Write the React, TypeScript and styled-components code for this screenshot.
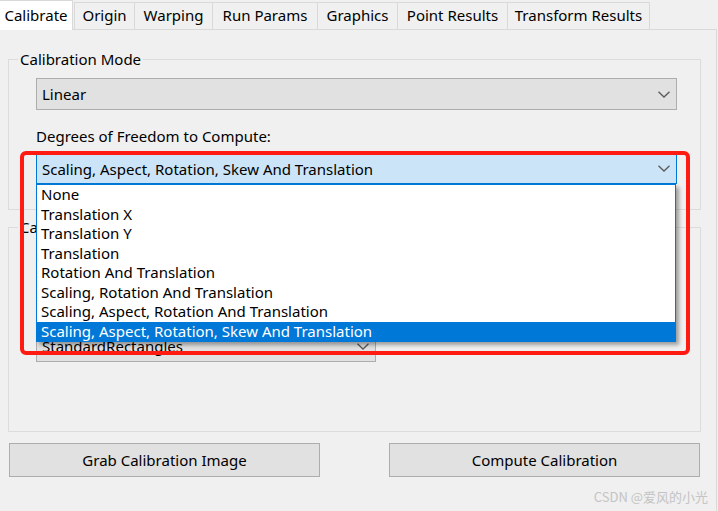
import React from "react";
import styled, { createGlobalStyle } from "styled-components";

const Global = createGlobalStyle`
  html, body { margin: 0; padding: 0; background: #f0f0f0; }
  body { font-family: "Segoe UI", "Noto Sans", "Liberation Sans", sans-serif; font-size: 15px; color: #000; }
  * { box-sizing: border-box; }
`;

const Window = styled.div`
  position: relative;
  width: 718px;
  height: 511px;
  overflow: hidden;
  background: #f0f0f0;
`;

const TabStrip = styled.div`
  display: flex;
  align-items: flex-end;
  height: 29px;
`;

const Tab = styled.div<{ $w: number; $active?: boolean }>`
  position: relative;
  z-index: ${(p) => (p.$active ? 2 : 1)};
  width: ${(p) => p.$w}px;
  height: ${(p) => (p.$active ? 30 : 27)}px;
  margin-bottom: ${(p) => (p.$active ? -1 : 0)}px;
  margin-right: ${(p) => (p.$active ? 1 : -1)}px;
  background: ${(p) => (p.$active ? "#ffffff" : "#f0f0f0")};
  border: 1px solid #d9d9d9;
  border-left: ${(p) => (p.$active ? "none" : "1px solid #d9d9d9")};
  border-bottom: none;
  display: flex;
  align-items: center;
  justify-content: center;
  padding-bottom: ${(p) => (p.$active ? 1 : 2)}px;
  white-space: nowrap;
`;

const TabPage = styled.div`
  width: 717px;
  height: 482px;
  border-top: 1px solid #d9d9d9;
  border-right: 1px solid #d9d9d9;
  padding: 19px 0 0 8px;
  display: flex;
  flex-direction: column;
`;

const GroupBox = styled.fieldset<{ $pt: number; $pb: number; $mt?: number }>`
  margin: ${(p) => p.$mt ?? 0}px 0 0 0;
  width: 693px;
  border: 1px solid #dcdcdc;
  padding: ${(p) => p.$pt}px 0 ${(p) => p.$pb}px 27px;
  min-width: 0;
`;

const Legend = styled.legend`
  margin-left: -18px;
  padding: 0 2px;
  line-height: 20px;
  height: 20px;
  margin-bottom: 0;
`;

const Combo = styled.div<{ $w?: number; $active?: boolean }>`
  width: ${(p) => p.$w ?? 641}px;
  height: ${(p) => (p.$active ? 31 : 32)}px;
  background: ${(p) => (p.$active ? "#cce4f7" : "#e1e1e1")};
  border: 1px solid ${(p) => (p.$active ? "#0078d7" : "#adadad")};
  display: flex;
  align-items: center;
  justify-content: space-between;
  padding: 0 6px 0 5px;
  white-space: nowrap;
  overflow: hidden;
`;

const FieldLabel = styled.div`
  line-height: 20px;
  margin: 16px 0 7px 0;
`;

const DropAnchor = styled.div`
  position: relative;
`;

const DropList = styled.div`
  position: absolute;
  left: 0;
  top: 31px;
  width: 640px;
  background: #fff;
  border: 1px solid #0078d7;
  box-shadow: 3px 3px 4px rgba(0, 0, 0, 0.35);
  z-index: 5;
`;

const Item = styled.div<{ $sel?: boolean }>`
  height: 19.5px;
  line-height: 19.5px;
  padding-left: 4px;
  white-space: nowrap;
  background: ${(p) => (p.$sel ? "#0078d7" : "transparent")};
  color: ${(p) => (p.$sel ? "#fff" : "#000")};
`;

const Highlight = styled.div`
  position: absolute;
  left: -16px;
  top: -2px;
  width: 670px;
  height: 204px;
  border: 4px solid #ff1a12;
  border-radius: 6px;
  z-index: 6;
  pointer-events: none;
`;

const ButtonRow = styled.div`
  display: flex;
  justify-content: space-between;
  width: 691px;
  margin: 11px 0 0 1px;
`;

const Button = styled.button`
  width: 311px;
  height: 34px;
  background: #e1e1e1;
  border: 1px solid #adadad;
  font: inherit;
  color: #000;
  padding: 0;
`;

const Watermark = styled.div`
  position: absolute;
  right: 10px;
  bottom: 5px;
  font-family: "Noto Sans CJK SC", "Noto Sans", sans-serif;
  font-size: 13px;
  color: #c4c4c4;
  z-index: 10;
`;

const Chevron = () => (
  <svg width="12" height="7" viewBox="0 0 12 7">
    <polyline points="0.5,0.8 6,6 11.5,0.8" fill="none" stroke="#5a5a5a" strokeWidth="1.3" />
  </svg>
);

const tabs: [string, number][] = [
  ["Calibrate", 73],
  ["Origin", 61],
  ["Warping", 79],
  ["Run Params", 106],
  ["Graphics", 81],
  ["Point Results", 111],
  ["Transform Results", 143],
];

const options = [
  "None",
  "Translation X",
  "Translation Y",
  "Translation",
  "Rotation And Translation",
  "Scaling, Rotation And Translation",
  "Scaling, Aspect, Rotation And Translation",
  "Scaling, Aspect, Rotation, Skew And Translation",
];

export default function App() {
  return (
    <Window>
      <Global />
      <TabStrip>
        {tabs.map(([t, w], i) => (
          <Tab key={t} $w={w} $active={i === 0}>
            {t}
          </Tab>
        ))}
      </TabStrip>
      <TabPage>
        <GroupBox $pt={9} $pb={25}>
          <Legend>Calibration Mode</Legend>
          <Combo>
            <span>Linear</span>
            <Chevron />
          </Combo>
          <FieldLabel>Degrees of Freedom to Compute:</FieldLabel>
          <DropAnchor>
            <Combo $active>
              <span>Scaling, Aspect, Rotation, Skew And Translation</span>
              <Chevron />
            </Combo>
            <DropList>
              {options.map((o, i) => (
                <Item key={o} $sel={i === options.length - 1}>
                  {o}
                </Item>
              ))}
            </DropList>
            <Highlight />
          </DropAnchor>
        </GroupBox>
        <GroupBox $pt={93} $pb={69} $mt={7}>
          <Legend>Calibration Plate</Legend>
          <Combo $w={340}>
            <span>StandardRectangles</span>
            <Chevron />
          </Combo>
        </GroupBox>
        <ButtonRow>
          <Button>Grab Calibration Image</Button>
          <Button>Compute Calibration</Button>
        </ButtonRow>
      </TabPage>
      <Watermark>CSDN @爱风的小光</Watermark>
    </Window>
  );
}
